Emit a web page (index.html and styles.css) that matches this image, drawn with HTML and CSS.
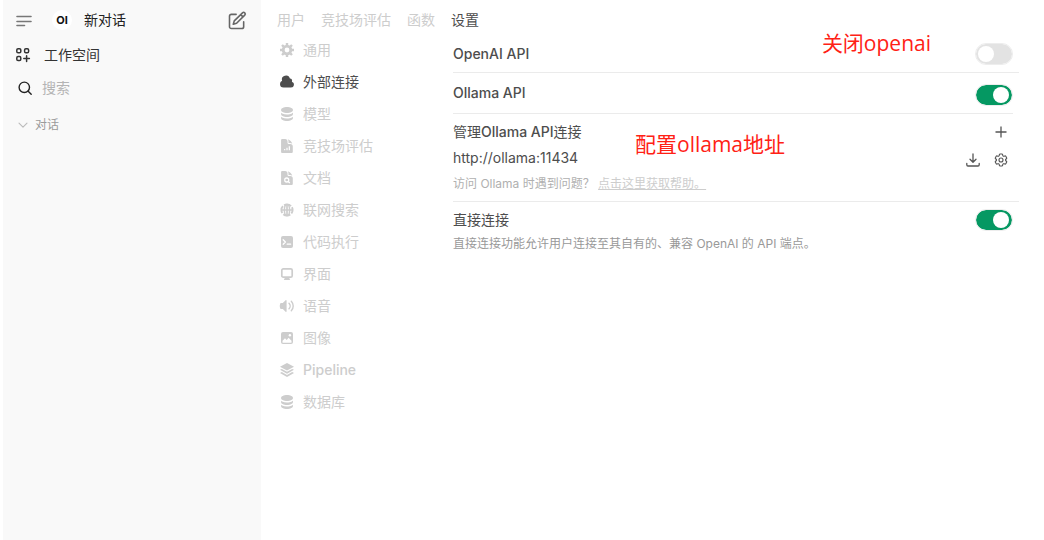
FILE: index.html
```html
<!DOCTYPE html>
<html lang="zh-CN">
<head>
<meta charset="utf-8">
<title>设置</title>
<link rel="stylesheet" href="styles.css">
</head>
<body>
<div class="app">
  <aside class="sidebar">
    <header class="sidebar-head">
      <button class="icon-button" aria-label="菜单">
        <svg class="icon-menu" viewBox="0 0 18 18" fill="none" stroke="#777" stroke-width="1.600" stroke-linecap="round"><path d="M2 5.500h14M2 10.500h14M2 14.500h7.500"/></svg>
      </button>
      <a class="new-chat" href="#"><span class="logo">OI</span><span>新对话</span></a>
      <button class="icon-button" aria-label="新建">
        <svg class="icon-edit" viewBox="0 0 24 24" fill="none" stroke="#666" stroke-width="1.900" stroke-linecap="round" stroke-linejoin="round"><path d="M11 5.200H5.200A2.200 2.200 0 0 0 3 7.400V20a2.200 2.200 0 0 0 2.200 2.200h12.600A2.200 2.200 0 0 0 20 20v-6"/><path d="M18.600 3.400a1.900 1.900 0 0 1 2.700 2.700l-9.800 9.800-4 1.200 1.200-4zM16.500 5.500l2.700 2.700"/></svg>
      </button>
    </header>
    <a class="workspace" href="#">
      <svg class="icon" viewBox="0 0 16 16" fill="none" stroke="#333" stroke-width="1.500"><rect x="1.800" y="1.800" width="4" height="4" rx="1.300"/><rect x="9.600" y="1.800" width="4" height="4" rx="1.300"/><rect x="1.800" y="9.600" width="4" height="4" rx="1.300"/><path d="M11.600 8.800v5.600M8.800 11.600h5.600" stroke-linecap="round"/></svg>
      <span>工作空间</span>
    </a>
    <label class="search">
      <svg class="icon" viewBox="0 0 16 16" fill="none" stroke="#222" stroke-width="1.400" stroke-linecap="round"><circle cx="7.300" cy="7.300" r="5.200"/><path d="m11.200 11.200 3 3"/></svg>
      <input type="text" placeholder="搜索" aria-label="搜索">
    </label>
    <button class="chats">
      <svg class="icon-chevron" viewBox="0 0 12 12" fill="none" stroke="#bbb" stroke-width="1.100" stroke-linecap="round" stroke-linejoin="round"><path d="m2 4.200 4 4 4-4"/></svg>
      <span>对话</span>
    </button>
  </aside>

  <main class="main">
    <nav class="tabs" aria-label="管理">
      <a href="#">用户</a><a href="#">竞技场评估</a><a href="#">函数</a><a class="current" href="#">设置</a>
    </nav>
    <div class="panel">
      <nav class="menu" aria-label="设置">
        <a href="#"><svg class="icon" viewBox="0 0 16 16" fill="none" stroke="currentColor"><circle cx="8" cy="8" r="3.800" stroke-width="2.800"/><path stroke-width="2.400" d="M8 1v2.400M8 12.600v2.400M1 8h2.400M12.600 8h2.400M3 3l1.700 1.700M11.300 11.300l1.700 1.700M3 13l1.700-1.700M11.300 4.700l1.700-1.700"/></svg>通用</a>
        <a class="current" href="#"><svg class="icon" viewBox="0 0 16 16" fill="currentColor"><path d="M1 10A3.500 3.500 0 0 0 4.500 13.500H12a3 3 0 0 0 .917-5.857 2.503 2.503 0 0 0-2-3.219 4 4 0 0 0-7.826 2.371A3.500 3.500 0 0 0 1 10Z"/></svg>外部连接</a>
        <a href="#"><svg class="icon" viewBox="0 0 16 16" fill="currentColor"><path d="M8 7c3.314 0 6-1.343 6-3s-2.686-3-6-3-6 1.343-6 3 2.686 3 6 3Z"/><path d="M8 8.500c1.840 0 3.579-.37 4.914-1.037A6.330 6.330 0 0 0 14 6.780V8c0 1.657-2.686 3-6 3S2 9.657 2 8V6.780c.346.273.72.5 1.087.683C4.420 8.131 6.160 8.500 8 8.500Z"/><path d="M8 12.500c1.840 0 3.579-.37 4.914-1.037.366-.183.74-.41 1.086-.684V12c0 1.657-2.686 3-6 3s-6-1.343-6-3v-1.220c.346.273.72.5 1.087.683C4.420 12.131 6.160 12.500 8 12.500Z"/></svg>模型</a>
        <a href="#"><svg class="icon" viewBox="0 0 24 24" fill="currentColor"><path d="M5 1.500c-1 0-1.900.8-1.900 1.900v17.200c0 1 .8 1.900 1.900 1.900h13.800c1 0 1.900-.8 1.900-1.900v-7.800a3.750 3.750 0 0 0-3.750-3.750h-2.300a1.900 1.900 0 0 1-1.870-1.870V5.250A3.750 3.750 0 0 0 9 1.500z"/><path d="M14.250 5.250a5.230 5.230 0 0 0-1.280-3.430 9.770 9.770 0 0 1 6.960 6.960A5.230 5.230 0 0 0 16.500 7.500h-1.900a.37.37 0 0 1-.37-.37z"/><path d="M8.500 18.500v-2M12 18.500v-4M15.500 18.500v-6" stroke="#fff" stroke-width="1.800"/></svg>竞技场评估</a>
        <a href="#"><svg class="icon" viewBox="0 0 24 24" fill="currentColor"><path d="M5 1.500c-1 0-1.900.8-1.900 1.900v17.200c0 1 .8 1.900 1.900 1.900h13.800c1 0 1.900-.8 1.900-1.900v-7.800a3.750 3.750 0 0 0-3.750-3.750h-2.300a1.900 1.900 0 0 1-1.870-1.870V5.250A3.750 3.750 0 0 0 9 1.500z"/><path d="M14.250 5.250a5.230 5.230 0 0 0-1.280-3.430 9.770 9.770 0 0 1 6.960 6.960A5.230 5.230 0 0 0 16.500 7.500h-1.900a.37.37 0 0 1-.37-.37z"/><g fill="none" stroke="#fff" stroke-width="1.900"><circle cx="11.600" cy="15" r="3"/><path d="m13.800 17.200 2.400 2.400"/></g></svg>文档</a>
        <a href="#"><svg class="icon" viewBox="0 0 16 16" fill="none" stroke="currentColor"><circle cx="8" cy="8" r="5.600" stroke-width="1.900" stroke-dasharray="7.400 1.396" stroke-dashoffset="3.700"/><ellipse cx="8" cy="8" rx="2.600" ry="5.600" stroke-width="1.500"/><path d="M2 8h12M8 2v12" stroke-width="1.700"/></svg>联网搜索</a>
        <a href="#"><svg class="icon" viewBox="0 0 16 16" fill="currentColor"><rect x="2" y="2" width="12" height="12" rx="2"/><path d="m4.200 5.800 2.200 2.200-2.200 2.200M8.200 10.200h3.400" fill="none" stroke="#fff" stroke-width="1.300" stroke-linecap="round" stroke-linejoin="round"/></svg>代码执行</a>
        <a href="#"><svg class="icon" viewBox="0 0 16 16" fill="none" stroke="currentColor"><rect x="2.800" y="2.800" width="10.400" height="8.400" rx="1.500" stroke-width="1.700"/><path d="M6 11.500h4l1.200 2.500H4.800z" fill="currentColor" stroke="none"/></svg>界面</a>
        <a href="#"><svg class="icon" viewBox="0 0 16 16" fill="currentColor"><path d="M7.600 2.700v10.600c0 .6-.6.900-1 .5L3.800 11H2a1 1 0 0 1-.9-.7 7 7 0 0 1 0-4.600A1 1 0 0 1 2 5h1.800l2.800-2.800c.4-.4 1-.1 1 .5z"/><path d="M10 5.200a4 4 0 0 1 0 5.600M12.300 3.200a7 7 0 0 1 0 9.600" fill="none" stroke="currentColor" stroke-width="1.400" stroke-linecap="round"/></svg>语音</a>
        <a href="#"><svg class="icon" viewBox="0 0 16 16"><rect x="2" y="2" width="12" height="12" rx="2" fill="currentColor"/><path d="m3.500 10.700 2.500-2.500 1.700 1.700 1.900-2.200 2.900 3v1.500a.5.500 0 0 1-.5.500H4a.5.500 0 0 1-.5-.5z" fill="#fff"/><circle cx="10.900" cy="5.200" r="1.200" fill="#fff"/></svg>图像</a>
        <a href="#"><svg class="icon" viewBox="0 0 16 16" fill="currentColor"><path d="m8 1 7 3.800-7 3.800-7-3.800z"/><path d="M1 7.800 2.800 6.900 8 9.700l5.200-2.800 1.800.9-7 3.900zM1 11l1.800-.9L8 12.900l5.200-2.800 1.800.9-7 3.900z"/></svg><span class="latin">Pipeline</span></a>
        <a href="#"><svg class="icon" viewBox="0 0 16 16" fill="currentColor"><path d="M8 7c3.314 0 6-1.343 6-3s-2.686-3-6-3-6 1.343-6 3 2.686 3 6 3Z"/><path d="M8 8.500c1.840 0 3.579-.37 4.914-1.037A6.330 6.330 0 0 0 14 6.780V8c0 1.657-2.686 3-6 3S2 9.657 2 8V6.780c.346.273.72.5 1.087.683C4.420 8.131 6.160 8.500 8 8.500Z"/><path d="M8 12.500c1.840 0 3.579-.37 4.914-1.037.366-.183.74-.41 1.086-.684V12c0 1.657-2.686 3-6 3s-6-1.343-6-3v-1.220c.346.273.72.5 1.087.683C4.420 12.131 6.160 12.500 8 12.500Z"/></svg>数据库</a>
      </nav>

      <form class="settings">
        <div class="row row-openai">
          <label class="latin" for="openai">OpenAI API</label>
          <input class="switch" id="openai" type="checkbox" role="switch">
        </div>
        <hr>
        <div class="row row-ollama">
          <label class="latin" for="ollama">Ollama API</label>
          <input class="switch" id="ollama" type="checkbox" role="switch" checked>
        </div>
        <hr class="inset">
        <section class="connections">
          <div class="row">
            <span>管理<span class="latin">Ollama API</span>连接</span>
            <button class="icon-button" type="button" aria-label="添加连接"><svg class="icon" viewBox="0 0 16 16" stroke="#555" stroke-width="1.300"><path d="M8 2.500v11M2.500 8h11"/></svg></button>
          </div>
          <div class="row">
            <span>http://ollama:11434</span>
            <span class="actions">
              <button class="icon-button" type="button" aria-label="下载"><svg class="icon" viewBox="0 0 16 16" fill="none" stroke="#555" stroke-width="1.300" stroke-linecap="round" stroke-linejoin="round"><path d="M8 2v8M5 7.200l3 3 3-3M1.800 11.500v1.300c0 .7.500 1.200 1.200 1.200h10c.7 0 1.200-.5 1.200-1.200v-1.300"/></svg></button>
              <button class="icon-button" type="button" aria-label="配置"><svg class="icon" viewBox="0 0 24 24" fill="none" stroke="#555" stroke-width="1.700" stroke-linejoin="round"><path d="M9.594 3.940c.09-.542.56-.940 1.110-.940h2.593c.55 0 1.020.398 1.110.940l.213 1.281c.063.374.313.686.645.870.074.040.147.083.220.127.324.196.720.257 1.075.124l1.217-.456a1.125 1.125 0 0 1 1.370.490l1.296 2.247a1.125 1.125 0 0 1-.260 1.431l-1.003.827c-.293.240-.438.613-.431.992v.255c-.007.378.138.750.430.990l1.005.828c.424.350.534.954.260 1.430l-1.298 2.247a1.125 1.125 0 0 1-1.369.491l-1.217-.456c-.355-.133-.750-.072-1.076.124l-.220.128c-.331.183-.581.495-.644.869l-.213 1.280c-.090.543-.560.941-1.110.941h-2.594c-.550 0-1.020-.398-1.110-.940l-.213-1.281c-.062-.374-.312-.686-.644-.870l-.220-.127c-.325-.196-.720-.257-1.076-.124l-1.217.456a1.125 1.125 0 0 1-1.369-.490l-1.297-2.247a1.125 1.125 0 0 1 .260-1.431l1.004-.827c.292-.240.437-.613.430-.992v-.255c.007-.378-.138-.750-.430-.990l-1.004-.828a1.125 1.125 0 0 1-.260-1.430l1.297-2.247a1.125 1.125 0 0 1 1.370-.491l1.216.456c.356.133.751.072 1.076-.124l.220-.128c.332-.183.582-.495.644-.869z"/><circle cx="12" cy="12" r="3"/></svg></button>
            </span>
          </div>
          <p class="help">访问 Ollama 时遇到问题？ <a href="#">点击这里获取帮助。</a></p>
        </section>
        <hr>
        <div class="row row-direct">
          <label for="direct">直接连接</label>
          <input class="switch" id="direct" type="checkbox" role="switch" checked>
        </div>
        <p class="note">直接连接功能允许用户连接至其自有的、兼容 OpenAI 的 API 端点。</p>
        <span class="callout callout-close">关闭openai</span>
        <span class="callout callout-address">配置ollama地址</span>
      </form>
    </div>
  </main>
</div>
</body>
</html>
```
FILE: styles.css
```css
* { box-sizing: border-box; }

body {
  margin: 0;
  background: #fff;
  color: #4d4d4d;
  font: 400 14px/20px Inter, "Noto Sans CJK SC", sans-serif;
}

a { color: inherit; text-decoration: none; }
p { margin: 0; }
svg { display: block; flex: none; }
button { padding: 0; border: 0; background: none; color: inherit; font: inherit; }
.icon { width: 16px; height: 16px; }
.icon-button { display: flex; flex: none; }
.latin { font-weight: 500; }

.app { display: flex; min-height: 100vh; padding-left: 3px; }

.sidebar {
  flex: none;
  width: 258px;
  padding: 10px 14px 10px 12px;
  background: #f9f9f9;
  color: #333;
}
.sidebar-head { display: flex; align-items: center; height: 20px; }
.icon-menu { width: 18px; height: 18px; }
.icon-edit { width: 20px; height: 20px; }
.new-chat { display: flex; flex: 1; align-items: center; gap: 12px; margin-left: 19px; color: #222; }
.logo {
  width: 20px;
  border-radius: 50%;
  background: #fff;
  color: #111;
  font-size: 11px;
  font-weight: 700;
  text-align: center;
}
.workspace { display: flex; align-items: center; gap: 13px; margin-top: 15px; }
.search { display: flex; align-items: center; gap: 9px; margin-top: 13px; padding-left: 2px; }
.search input {
  flex: 1;
  min-width: 0;
  height: 20px;
  padding: 0;
  border: 0;
  outline: 0;
  background: none;
  color: #333;
  font: inherit;
}
.search input::placeholder { color: #b4b4b4; opacity: 1; }
.chats { display: flex; align-items: center; gap: 6px; margin-top: 17px; padding-left: 2px; color: #9b9b9b; font-size: 12px; }
.icon-chevron { width: 12px; height: 12px; }

.main { flex: 1; min-width: 0; padding: 10px 25px 0 16px; }
.tabs { display: flex; gap: 16px; color: #cdcdcd; }
.tabs .current { color: #4d4d4d; }
.panel { display: flex; gap: 16px; }

.menu { display: flex; flex: none; flex-direction: column; gap: 12px; width: 160px; padding: 10px 2px; color: #cdcdcd; }
.menu a { display: flex; align-items: center; gap: 8px; }
.menu .current { color: #4d4d4d; }

.settings { position: relative; flex: 1; min-width: 0; }
.settings hr { height: 1px; margin: 0; border: 0; background: #ebebeb; }
.settings .inset { margin-right: 6px; }
.row { display: flex; align-items: center; justify-content: space-between; padding-right: 6px; }
.row-openai { padding-top: 14px; padding-bottom: 8px; }
.row-ollama { align-items: flex-start; padding-top: 10px; padding-bottom: 8px; }
.row-ollama .switch { margin-top: 2px; }
.row-direct { padding-top: 8px; }

.switch {
  display: block;
  flex: none;
  width: 36px;
  height: 20px;
  margin: 0 1px 0 0;
  padding: 2px;
  border-radius: 10px;
  background: #e3e3e3;
  outline: 1px solid #ededed;
  appearance: none;
}
.switch::before { content: ""; display: block; width: 16px; height: 16px; border-radius: 50%; background: #fff; }
.switch:checked { background: #059862; }
.switch:checked::before { margin-left: 15px; }

.connections { display: flex; flex-direction: column; gap: 6px; padding: 8px 0 7px; }
.connections .row { padding-right: 10px; }
.actions { display: flex; gap: 12px; padding-top: 4px; }
.help { color: #b0b0b0; font-size: 12px; }
.help a { color: #cdcdcd; text-decoration: underline; }
.note { margin-top: 4px; color: #999; font-size: 12px; }

.callout { position: absolute; color: #ff2115; font: 400 21px/28px "Open Sans", "Noto Sans CJK SC", sans-serif; white-space: nowrap; }
.callout-close { top: -1px; right: 88px; }
.callout-address { top: 100px; left: 182px; }
```
